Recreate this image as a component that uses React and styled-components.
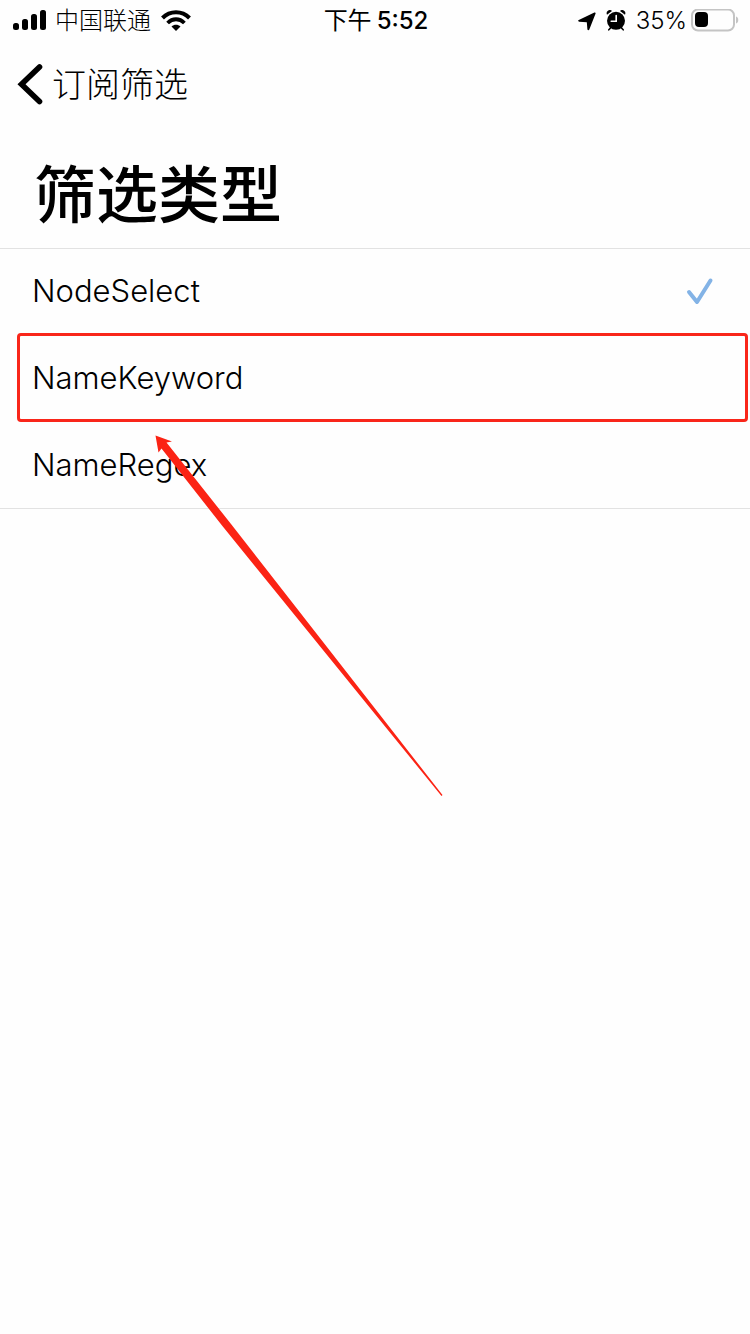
import React, { useState } from "react";
import styled, { createGlobalStyle } from "styled-components";

const GlobalStyle = createGlobalStyle`
  *, *::before, *::after { box-sizing: border-box; }
  body {
    margin: 0;
    background: #fefefe;
    color: #000;
    font-family: Inter, "Noto Sans CJK SC", sans-serif;
  }
`;

const Screen = styled.div`
  min-height: 100vh;
  overflow: hidden;
`;

const StatusBar = styled.div`
  display: grid;
  grid-template-columns: 1fr auto 1fr;
  align-items: center;
  height: 42px;
  padding: 0 11px 0 13px;
  font-size: 24px;
  line-height: 42px;
  white-space: nowrap;
`;

const StatusGroup = styled.div`
  display: flex;
  align-items: center;
  gap: ${(p) => p.$gap}px;
  justify-content: ${(p) => (p.$end ? "flex-end" : "flex-start")};
`;

const Carrier = styled.span`
  padding-right: 2px;
  font-weight: 300;
`;

const Clock = styled.time`
  display: flex;
  gap: 5px;
  font-weight: 500;
`;

const Meridiem = styled.span`
  font-weight: 400;
`;

const Percent = styled.span`
  font-weight: 300;
`;

const NavBar = styled.nav`
  display: flex;
  align-items: center;
  height: 86px;
  padding: 0 17px;
`;

const BackButton = styled.button`
  display: flex;
  align-items: center;
  gap: 8px;
  padding: 0;
  border: 0;
  background: none;
  color: inherit;
  font: inherit;
  font-size: 34px;
  font-weight: 300;
  line-height: 48px;
  cursor: pointer;
`;

const Title = styled.h1`
  margin: 0;
  padding: 28px 34px 12px;
  font-size: 62px;
  font-weight: 500;
  line-height: 80px;
`;

const OptionList = styled.div`
  position: relative;
  box-shadow: inset 0 1px #e2e2e2, inset 0 -1px #e2e2e2;
`;

const OptionRow = styled.label`
  position: relative;
  display: flex;
  align-items: center;
  justify-content: space-between;
  height: 87px;
  padding: 0 36px 2px 32px;
  font-size: 31px;
  font-weight: 300;
  line-height: 40px;
  cursor: pointer;
`;

const OptionInput = styled.input`
  position: absolute;
  inset: 0;
  margin: 0;
  appearance: none;
  outline: none;
  cursor: pointer;
`;

const Highlight = styled.span`
  position: absolute;
  inset: -2px 2px 0 17px;
  border: 3px solid #f9261a;
  border-radius: 4px;
  pointer-events: none;
`;

const ArrowOverlay = styled.svg`
  position: absolute;
  top: 187px;
  left: 155px;
  pointer-events: none;
`;

const SignalIcon = () => (
  <svg width="34" height="22" viewBox="0 0 34 22" aria-hidden="true">
    <rect x="0" y="13" width="6" height="7" rx="2.500" />
    <rect x="9" y="9" width="6" height="11" rx="2.500" />
    <rect x="18" y="4" width="6" height="16" rx="2.500" />
    <rect x="27" y="0" width="6" height="20" rx="2.500" />
  </svg>
);

const WifiIcon = () => (
  <svg width="30" height="22" viewBox="0 0 30 22" fill="none" stroke="#000" aria-hidden="true">
    <path d="M1.500 8C9 .3 21 .3 28.500 8" strokeWidth="4" />
    <path d="M6.600 13C11.500 8 18.500 8 23.400 13" strokeWidth="3.800" />
    <path d="M10.500 16.500C13 14.200 17 14.200 19.500 16.500L15 21Z" fill="#000" stroke="none" />
  </svg>
);

const LocationIcon = () => (
  <svg width="18" height="19" viewBox="0 0 18 19" aria-hidden="true">
    <path d="M16.400.6C17.300.2 17.900.8 17.500 1.700L11.300 17.500C10.900 18.600 9.500 18.400 9.400 17.200L8.800 10.200L1.200 9.700C0 9.600-.2 8.400.8 8Z" />
  </svg>
);

const AlarmIcon = () => (
  <svg width="20" height="22" viewBox="0 0 20 22" aria-hidden="true">
    <circle cx="10" cy="10.800" r="9" />
    <path d="M1 4.700A3.200 3.200 0 0 1 6 .9ZM19 4.700A3.200 3.200 0 0 0 14 .9Z" />
    <path d="M4.500 18L2.800 19.800M15.500 18L17.200 19.800" stroke="#000" strokeWidth="1.600" strokeLinecap="round" />
    <path d="M10.200 5.500V11.300H5.200" fill="none" stroke="#fff" strokeWidth="1.600" strokeLinecap="round" />
  </svg>
);

const BatteryIcon = () => (
  <svg width="48" height="24" viewBox="0 0 48 24" aria-hidden="true">
    <rect x="1" y="0.500" width="42" height="21" rx="6" fill="none" stroke="#c4c4c4" strokeWidth="2" />
    <rect x="4" y="3" width="13" height="15" rx="4" />
    <path d="M45 7.500C48 8 48 14 45 14.500Z" fill="#c4c4c4" />
  </svg>
);

const ChevronIcon = () => (
  <svg width="27" height="42" viewBox="0 0 27 42" fill="none" stroke="#000" strokeWidth="5.600" strokeLinecap="round" strokeLinejoin="miter" aria-hidden="true">
    <path d="M22.500 3L4.500 20.200L22.500 37.500" />
  </svg>
);

const CheckIcon = () => (
  <svg width="28" height="28" viewBox="0 0 28 28" fill="none" stroke="#83b3e6" strokeWidth="4" strokeLinecap="round" strokeLinejoin="round" aria-hidden="true">
    <path d="M3 15L11 25L24.500 3.500" />
  </svg>
);

const options = ["NodeSelect", "NameKeyword", "NameRegex"];

export default function App() {
  const [selected, setSelected] = useState("NodeSelect");

  return (
    <Screen>
      <GlobalStyle />
      <StatusBar>
        <StatusGroup $gap={8}>
          <SignalIcon />
          <Carrier>中国联通</Carrier>
          <WifiIcon />
        </StatusGroup>
        <Clock>
          <Meridiem>下午</Meridiem>5:52
        </Clock>
        <StatusGroup $gap={10} $end>
          <LocationIcon />
          <AlarmIcon />
          <StatusGroup $gap={4}>
            <Percent>35%</Percent>
            <BatteryIcon />
          </StatusGroup>
        </StatusGroup>
      </StatusBar>
      <NavBar>
        <BackButton type="button">
          <ChevronIcon />
          订阅筛选
        </BackButton>
      </NavBar>
      <main>
        <Title>筛选类型</Title>
        <OptionList role="radiogroup" aria-label="筛选类型">
          {options.map((name) => (
            <OptionRow key={name}>
              <OptionInput
                type="radio"
                name="filter-type"
                value={name}
                checked={selected === name}
                onChange={() => setSelected(name)}
              />
              <span>{name}</span>
              {selected === name && <CheckIcon />}
              {name === "NameKeyword" && <Highlight />}
            </OptionRow>
          ))}
          <ArrowOverlay width="290" height="362" viewBox="0 0 290 362" aria-hidden="true">
            <path d="M.5.5L17 6.500L11.500 7.500L76 89L287.500 360L286.500 361L67 90.500L6.500 13.500L3.500 17.500Z" fill="#fb2314" />
          </ArrowOverlay>
        </OptionList>
      </main>
    </Screen>
  );
}
